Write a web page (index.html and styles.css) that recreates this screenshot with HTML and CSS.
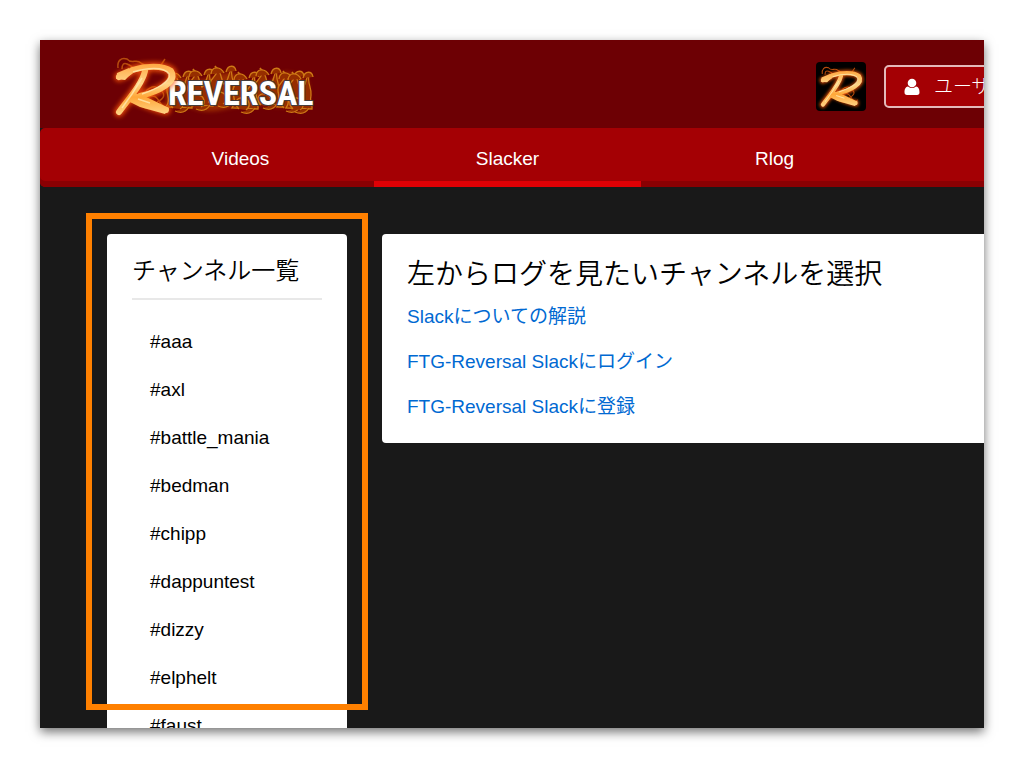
FILE: index.html
```html
<!DOCTYPE html>
<html lang="ja">
<head>
<meta charset="utf-8">
<title>Reversal - Slacker</title>
<link rel="stylesheet" href="styles.css">
</head>
<body>
<div class="window">
  <header class="header">
    <a class="logo" href="#" aria-label="Reversal">
      <svg width="208" height="72" viewBox="108 50 208 72">
        <defs>
          <filter id="glow" x="-20%" y="-20%" width="140%" height="140%"><feGaussianBlur stdDeviation="2"/></filter>
          <filter id="soft" x="-10%" y="-20%" width="120%" height="140%"><feGaussianBlur stdDeviation="0.6"/></filter>
          <filter id="haze" x="-10%" y="-20%" width="120%" height="140%"><feGaussianBlur stdDeviation="2.2"/></filter>
          <linearGradient id="fire" gradientUnits="userSpaceOnUse" x1="0" y1="62" x2="0" y2="116"><stop offset="0" stop-color="#ffa43c"/><stop offset=".4" stop-color="#ffd68a"/><stop offset=".65" stop-color="#ffa738"/><stop offset="1" stop-color="#ffd78c"/></linearGradient>
          <g id="brush" fill="none" stroke-linecap="round" stroke-linejoin="round">
            <path d="M119 77C124 74 128 75 132 70C145 66 163 65 171 71C178 82 158 92 140 96"/>
            <path d="M145 71C142 84 130 97 119 112"/>
            <path d="M133 98C141 101 153 108 166 110"/>
          </g>
          <g id="mark">
            <g fill="none" stroke="#b64c0b" stroke-width="1.5" filter="url(#soft)">
              <path d="M118 68C117 61 121 57 127 59C132 65 136 58 141 63C145 66 153 66 159 68L165 59"/>
              <path d="M122 69Q122 62 127 64T133 68M146 91Q154 83 161 90T157 102M145 101Q153 91 159 101T169 105M126 106Q132 98 139 104T151 108"/>
            </g>
            <use href="#brush" stroke="#ff5a08" stroke-width="10" filter="url(#glow)" opacity=".75"/>
            <use href="#brush" stroke="url(#fire)" stroke-width="6"/>
            <path d="M117 73L129 68L132 73L125 80L116 79ZM134 94L140 94L169 108L165 114L140 107L130 102Z" fill="url(#fire)"/>
            <path d="M133 72C146 68 164 66 169 74C171 81 157 89 142 94M142 78L132 94L122 108M138 99L150 103" fill="none" stroke="#ffeab0" stroke-width="1.5" opacity=".8"/>
          </g>
          <g id="flame">
            <path d="M0 107C7 98-4 91 4 83C8 78 9 77 6 71C14 78 11 84 15 89C22 83 18 78 23 74C21 83 26 87 25 94C23 101 27 104 26 108Z"/>
            <path d="M7 108C0 101 6 96 11 97C18 98 19 106 14 109M2 79C3 70 12 72 15 78M17 77C19 69 26 70 27 76M9 111Q18 115 23 107"/>
          </g>
        </defs>
        <path d="M166 107V82Q178 76 190 79T217 75T246 80T274 78T309 83V106Q290 109 269 106T226 109T188 106Z" fill="#b44304" opacity=".65" filter="url(#haze)"/>
        <g fill="#962d02" stroke="#ce7915" stroke-width="1.3" filter="url(#soft)">
          <use href="#flame" x="166"/>
          <use href="#flame" x="187" y="-2"/>
          <use href="#flame" x="209" y="-5"/>
          <use href="#flame" x="232" y="1"/>
          <use href="#flame" x="254" y="-3"/>
          <use href="#flame" x="277"/>
          <use href="#flame" x="286" y="1"/>
        </g>
        <text class="logo-text" x="168" y="105">REVERSAL</text>
        <use href="#mark"/>
      </svg>
    </a>
    <div class="account">
      <svg class="avatar" viewBox="109 51 72 70" role="img" aria-label="R"><use href="#mark"/></svg>
      <button class="user-button" type="button">
        <svg width="16" height="18" viewBox="0 0 16 18" fill="#fff" aria-hidden="true"><circle cx="8" cy="5" r="4.3"/><path d="M4 8.5C1 9 .5 12 .5 14.3Q.5 17 3 17H13Q15.500 17 15.500 14.300C15.500 12 15 9 12 8.500Q8 11.500 4 8.500Z"/></svg>
        ユーザー
      </button>
    </div>
  </header>
  <nav class="nav">
    <a class="tab" href="#">Videos</a>
    <a class="tab active" href="#" aria-current="page">Slacker</a>
    <a class="tab" href="#">Rlog</a>
  </nav>
  <main class="content">
    <aside class="card channels">
      <h2 class="channels-title">チャンネル一覧</h2>
      <ul class="channel-list">
        <li><a href="#">#aaa</a></li>
        <li><a href="#">#axl</a></li>
        <li><a href="#">#battle_mania</a></li>
        <li><a href="#">#bedman</a></li>
        <li><a href="#">#chipp</a></li>
        <li><a href="#">#dappuntest</a></li>
        <li><a href="#">#dizzy</a></li>
        <li><a href="#">#elphelt</a></li>
        <li><a href="#">#faust</a></li>
      </ul>
    </aside>
    <section class="card intro">
      <h1 class="intro-title">左からログを見たいチャンネルを選択</h1>
      <a href="#">Slackについての解説</a>
      <a href="#">FTG-Reversal Slackにログイン</a>
      <a href="#">FTG-Reversal Slackに登録</a>
    </section>
  </main>
  <div class="highlight" aria-hidden="true"></div>
</div>
</body>
</html>
```
FILE: styles.css
```css
* { box-sizing: border-box; }

body {
  margin: 0;
  padding: 40px;
  background: #fff;
  font: 19px/28px "Liberation Sans", "Noto Sans CJK JP", sans-serif;
}

a { text-decoration: none; }

.window {
  position: relative;
  height: calc(100vh - 80px);
  overflow: hidden;
  background: #191919;
  box-shadow: 0 4px 10px rgba(0, 0, 0, .55);
}

.header {
  display: flex;
  justify-content: space-between;
  height: 88px;
  padding: 10px 0 0 68px;
  background: #6d0004;
}

.logo { height: 72px; }
.logo svg { display: block; }

.logo-text {
  font: bold 34px "Liberation Sans Narrow", "Roboto Condensed", "Liberation Sans", sans-serif;
  fill: #fff;
  stroke: #453d3c;
  stroke-width: 2px;
  paint-order: stroke;
}

.account {
  display: flex;
  gap: 18px;
  margin-right: -60px;
  padding-top: 12px;
}

.avatar {
  width: 50px;
  height: 49px;
  border-radius: 4px;
  background: #000;
}

.user-button {
  display: flex;
  align-items: center;
  gap: 14px;
  width: 160px;
  height: 43px;
  margin-top: 3px;
  padding: 0 18px;
  border: 2px solid #e3b9ba;
  border-radius: 5px;
  background: #a40004;
  color: #fff;
  font: inherit;
  font-weight: 300;
  white-space: nowrap;
}

.nav {
  display: flex;
  height: 59px;
  padding-left: 67px;
  border-radius: 5px 0 0 5px;
  background: #a40004;
  box-shadow: inset 0 -6px #8a0003;
}

.tab {
  flex: 0 0 267px;
  padding-top: 17px;
  color: #fff;
  text-align: center;
}

.active { border-bottom: 6px solid #e00005; }

.content {
  display: flex;
  align-items: flex-start;
  gap: 35px;
  padding: 47px 0 0 67px;
}

.card {
  border-radius: 4px;
  background: #fff;
}

.channels {
  flex: 0 0 240px;
  padding: 19px 25px;
}

.channels-title {
  margin: 0;
  padding-bottom: 10px;
  border-bottom: 2px solid #e8e8e8;
  font-size: 24px;
  font-weight: 350;
  line-height: 35px;
}

.channel-list {
  margin: 0;
  padding: 18px 0 0 18px;
  list-style: none;
}

.channel-list a {
  display: block;
  color: #000;
  line-height: 48px;
}

.intro {
  display: flex;
  flex: 1;
  flex-direction: column;
  align-items: flex-start;
  gap: 17px;
  padding: 21px 25px 22px;
  border-radius: 4px 0 0 4px;
}

.intro-title {
  margin: 0 0 -9px;
  font-size: 28px;
  font-weight: 350;
  line-height: 40px;
}

.intro a { color: #0069d2; }

.highlight {
  position: absolute;
  top: 173px;
  left: 46px;
  width: 282px;
  height: 497px;
  border: 6px solid #ff8000;
  pointer-events: none;
}
```
